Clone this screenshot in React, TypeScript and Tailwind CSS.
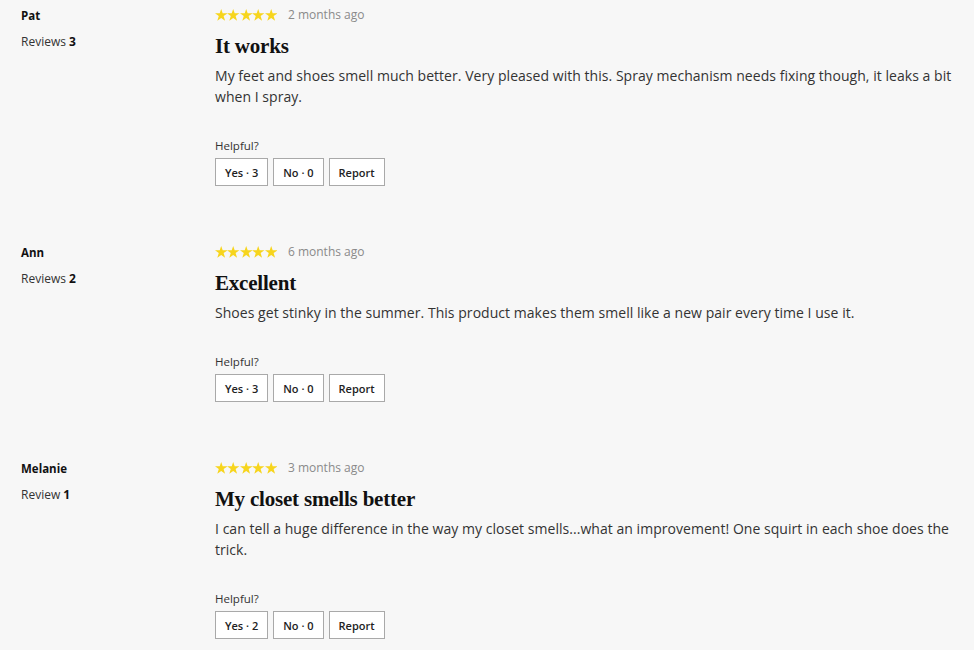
const reviews = [
  {
    name: 'Pat',
    countLabel: 'Reviews',
    count: 3,
    when: '2 months ago',
    title: 'It works',
    body: 'My feet and shoes smell much better. Very pleased with this. Spray mechanism needs fixing though, it leaks a bit when I spray.',
    yes: 3,
    no: 0,
  },
  {
    name: 'Ann',
    countLabel: 'Reviews',
    count: 2,
    when: '6 months ago',
    title: 'Excellent',
    body: 'Shoes get stinky in the summer. This product makes them smell like a new pair every time I use it.',
    yes: 3,
    no: 0,
  },
  {
    name: 'Melanie',
    countLabel: 'Review',
    count: 1,
    when: '3 months ago',
    title: 'My closet smells better',
    body: 'I can tell a huge difference in the way my closet smells...what an improvement! One squirt in each shoe does the trick.',
    yes: 2,
    no: 0,
  },
];

function Star() {
  return (
    <svg width="12.4" height="12" viewBox="0 0 24 23" className="fill-[#f7d51d]">
      <path d="M12 0l2.9 8.3H24l-7.3 5.3 2.8 8.9L12 17.1l-7.5 5.4 2.8-8.9L0 8.3h9.1z" />
    </svg>
  );
}

function VoteButton({ label }: { label: string }) {
  return (
    <button
      type="button"
      className="h-[28px] px-[9px] border border-[#a9a9a9] bg-white text-[11px] font-semibold text-[#222] leading-none"
    >
      {label}
    </button>
  );
}

function ReviewRow({ review }: { review: (typeof reviews)[number] }) {
  return (
    <div className="flex">
      <div className="w-[215px] shrink-0 pl-[21px]">
        <p className="text-[11.5px] font-bold leading-[18px] text-[#111]">{review.name}</p>
        <p className="mt-[8px] text-[12px] leading-[18px] text-[#333]">
          {review.countLabel} <span className="font-bold text-[#111]">{review.count}</span>
        </p>
      </div>
      <div className="flex-1 min-w-0 pr-[14px]">
        <div className="flex items-center h-[16px]">
          <div className="flex">
            {[0, 1, 2, 3, 4].map((i) => (
              <Star key={i} />
            ))}
          </div>
          <span className="ml-[11px] text-[12px] text-[#8a8a8a]">{review.when}</span>
        </div>
        <h3 className="mt-[9px] text-[21px] leading-[28px] font-bold text-[#111] font-['Liberation_Serif',serif] tracking-[-0.2px]">
          {review.title}
        </h3>
        <p className="mt-[5px] text-[14px] tracking-[0.04px] leading-[21px] text-[#333]">{review.body}</p>
        <p className="mt-[31px] text-[11.5px] leading-[16px] text-[#333]">Helpful?</p>
        <div className="mt-[4px] flex gap-[5px]">
          <VoteButton label={`Yes · ${review.yes}`} />
          <VoteButton label={`No · ${review.no}`} />
          <VoteButton label="Report" />
        </div>
      </div>
    </div>
  );
}

export default function App() {
  return (
    <div className="min-h-[650px] w-[974px] bg-[#f7f7f7] pt-[7px] font-['Open_Sans',sans-serif] flex flex-col gap-[58px]">
      {reviews.map((r) => (
        <ReviewRow key={r.name} review={r} />
      ))}
    </div>
  );
}
